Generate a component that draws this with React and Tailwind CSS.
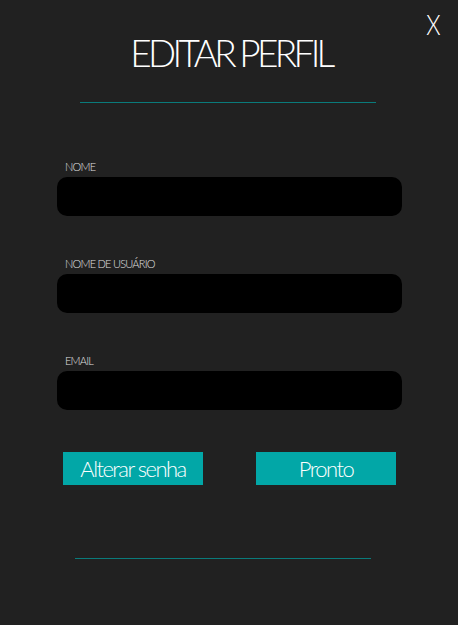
import React from 'react';

const Campo = ({ label, className }) => (
    <div className={className}>
        <label className="block pl-2 text-[11px] leading-none font-light tracking-[-0.07em] text-[#e0e0e0] uppercase">
            {label}
        </label>
        <input
            type="text"
            className="mt-[5px] block w-[345px] h-[39px] rounded-[10px] bg-black border-0 outline-none px-3 text-white"
        />
    </div>
);

const App = () => {
    return (
        <div
            className="relative w-[458px] h-[625px] bg-[#212121] overflow-hidden"
            style={{ fontFamily: 'Lato, "Open Sans", sans-serif' }}
        >
            {/* botão fechar */}
            <button className="absolute top-[11px] right-[16px] text-[27px] leading-none font-light text-white scale-x-[0.85]">
                X
            </button>

            <div className="flex flex-col">
                <h1 className="mt-[34px] pl-[4px] text-center text-[37px] leading-none font-light text-white tracking-[-0.1em]">
                    EDITAR PERFIL
                </h1>
                <div className="mt-[31px] ml-[80px] w-[296px] h-px bg-[#0a7b7b]" />

                <div className="ml-[57px]">
                    <Campo label="Nome" className="mt-[58px]" />
                    <Campo label="Nome de usuário" className="mt-[42px]" />
                    <Campo label="Email" className="mt-[42px]" />
                </div>

                <div className="mt-[42px] ml-[63px] flex gap-[53px]">
                    <button className="w-[140px] h-[33px] bg-[#02a7a7] text-white text-[22px] font-light leading-none tracking-[-0.07em]">
                        Alterar senha
                    </button>
                    <button className="w-[140px] h-[33px] bg-[#02a7a7] text-white text-[22px] font-light leading-none tracking-[-0.07em]">
                        Pronto
                    </button>
                </div>

                <div className="mt-[73px] ml-[75px] w-[296px] h-px bg-[#0a7b7b]" />
            </div>
        </div>
    );
};

export default App;
